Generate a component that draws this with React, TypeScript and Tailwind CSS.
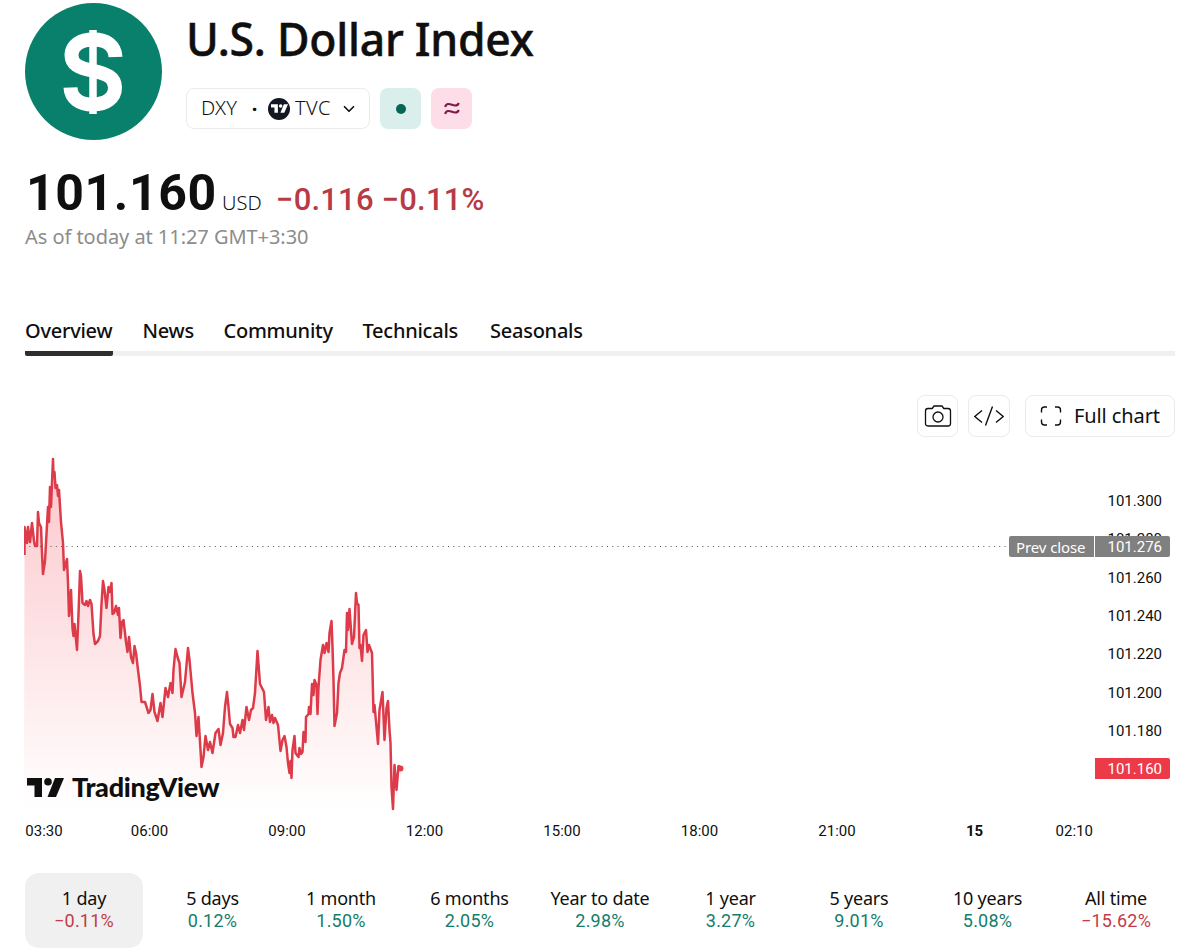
import { ChevronDown } from "lucide-react";

const tabs = [
  { label: "Overview", width: "w-[88px]" },
  { label: "News", width: "w-[51.500px]" },
  { label: "Community", width: "w-[109.500px]" },
  { label: "Technicals", width: "w-[98px]" },
  { label: "Seasonals", width: "w-[94px]" },
];

const prices = ["101.300", "101.280", "101.260", "101.240", "101.220", "101.200", "101.180"];

const times = ["06:00", "09:00", "12:00", "15:00", "18:00", "21:00", "15"];

const periods = [
  { label: "1 day", change: "−0.11%" },
  { label: "5 days", change: "0.12%" },
  { label: "1 month", change: "1.50%" },
  { label: "6 months", change: "2.05%" },
  { label: "Year to date", change: "2.98%" },
  { label: "1 year", change: "3.27%" },
  { label: "5 years", change: "9.01%" },
  { label: "10 years", change: "5.08%" },
  { label: "All time", change: "−15.62%" },
];

// x,y pairs of the price line
const line =
  "24.5,555 24.5,527 27,543 28,527 30,542 32,523 34,541 35,546 37,546 38,512 39,523 41,527 42,553 43,574 45,561 47,525 48,507 49,522 50,487 51,507 53,459 53.5,477 54.5,472 55.5,488 57,485 58,496 59,490 61,522 63,543 64,570 67,559 68,583 69,616 71,590 72.5,628 73.5,636 74.5,624 77,650 78.5,614 80,571 81,576 82.5,603 85,605 86.5,601 88,606 90,600 91.5,604 93.5,634 95,644 98,641 100,636 101.5,604 103,581 104.5,590 106.5,608 108.5,587 110,592 111.5,583 112.5,614 114,613 116,606 118,615 119,608 120.5,638 122,622 123.5,620 126,642 127.5,652 129,637 131,657 133,663 134.5,646 136,653 138,670 140,686 141.5,702 145,702 148.5,713 150.5,710 152.5,694 154.5,712 157.5,721 160.5,703 162.5,717 165.5,688 168,697 170.5,683 172.5,693 173.5,670 175.5,649 177.5,657 179.5,663 181.5,697 185,682 188,648 189.5,660 192.5,693 195,713 196.5,736 198.5,717 200.5,750 201.5,767 203.5,757 205.5,736 208,750 210,742 212.5,753 215.5,733 218.5,729 220.5,745 223,733 225,707 227,692 228.5,707 230,724 232.5,728 233.5,737 235.5,737 238,725 240,733 242.5,720 244,730 246.5,707 249,720 251,710 253,708 255,693 257.5,651 260,684 264,692 266,720 268.5,707 270,722 272,715 273.5,723 275,718 278,725 280.5,751 282.5,740 284.5,736 286.5,747 288,763 289.5,773 290.5,761 291.5,778 292.5,750 294.5,736 295.5,753 298.5,757 299.5,748 301,754 302.5,752 303.5,732 305.5,742 306,717 308.5,714 309,707 310.5,714 312,684 313.5,695 314.5,680 316.5,685 317.5,714 318.5,687 320.5,660 323,645 324.5,653 326.5,643 328.5,652 329.5,633 331.5,621 332.5,647 333.5,680 334.5,726 337,713 338.5,683 340,673 342,668 344.5,650 346,652 347,613 348,630 349.5,609 351,630 352,644 354,637 356,593 357,603 358.5,605 359.5,648 360.5,645 362,661 363.5,635 366,630 367.5,652 369,645 372,653 373.5,712 374.5,705 376.5,727 378,744 379.5,710 382.5,692 384.5,740 386.5,708 388,701 389.5,730 390.5,743 391.5,787 393,809 394.5,765 396.5,790 398.5,766 401,768.5";

function TvMark({ className }: { className: string }) {
  return (
    <svg viewBox="0 0 37 19" className={className} fill="currentColor">
      <path d="M0 0h15v19H7.5V7.5H0z" />
      <circle cx="21" cy="3.8" r="3.8" />
      <path d="M28 0h9l-8 19h-8.5z" />
    </svg>
  );
}

function Header() {
  return (
    <header className="flex h-[140px] gap-[24.500px] pt-[3px] pl-[24.500px]">
      <div className="flex h-[137px] w-[137px] items-center justify-center rounded-full bg-[#08806b]">
        <svg viewBox="0 0 60 84" className="h-[84px] w-[60px]" fill="none" stroke="#fff">
          <path d="M30 0v84" strokeWidth="7.5" />
          <path
            d="M52.5 27C52 15.500 43.500 9.500 30.500 9.500C17 9.500 8.500 15.500 8.500 25C8.500 34.500 15.500 37.500 29 40.500C44.500 44 52 47.500 52 57.500C52 68 43 74.500 30 74.500C16 74.500 8 68 7.500 57.500"
            strokeWidth="14"
          />
        </svg>
      </div>
      <div>
        <h1 className="mt-[5px] h-[62px] text-[44.500px] leading-[62px] font-medium tracking-[-0.25px] whitespace-nowrap [-webkit-text-stroke:0.5px_#0f0f0f]">
          U.S. Dollar Index
        </h1>
        <div className="mt-[18px] flex gap-[10px]">
          <div className="flex h-[41px] w-[184px] items-center rounded-[8px] border border-[#ebebeb] pl-[14px] text-[20px] leading-[38px]">
            <span className="w-[40px] pb-px font-light tracking-[0.2px]">DXY</span>
            <span className="w-[27px] text-center font-bold">·</span>
            <span className="flex h-[22px] w-[22px] items-center justify-center rounded-full bg-[#131722] text-white">
              <TvMark className="h-[9px] w-[17px]" />
            </span>
            <span className="ml-[5px] w-[39px] pb-px font-light tracking-[0.5px]">TVC</span>
            <ChevronDown className="ml-[6px] h-[18px] w-[18px]" strokeWidth={2.2} />
          </div>
          <div className="flex h-[41px] w-[41px] items-center justify-center rounded-[8px] bg-[#daefeb]">
            <span className="h-[10px] w-[10px] rounded-full bg-[#056656]" />
          </div>
          <div className="flex h-[41px] w-[41px] items-center justify-center rounded-[8px] bg-[#fcdde8]">
            <svg viewBox="0 0 16 13" className="h-[13px] w-[16px]" fill="none" stroke="#7d1a4c" strokeWidth="2.1">
              <path d="M1.200 5C2 1.200 5 1.600 8 2.800S13.500 4 14.800 1M1.200 12C2 8.200 5 8.600 8 9.800S13.500 11 14.800 8" />
            </svg>
          </div>
        </div>
      </div>
    </header>
  );
}

function Quote() {
  return (
    <section className="pl-[25px]">
      <div className="flex h-[84px] items-baseline pt-[18px]">
        <span className="w-[197px] pl-px font-[Roboto] text-[50px] leading-[70px] font-bold tracking-[0.6px]">101.160</span>
        <span className="w-[54px] text-[20px] font-light tracking-[0.1px]">USD</span>
        <span className="font-[Roboto] text-[31px] font-medium tracking-[0.2px] text-[#b73a45]">−0.116 −0.11%</span>
      </div>
      <p className="text-[20px] leading-[26px] tracking-[-0.05px] text-[#8c8c8c]">As of today at 11:27 GMT+3:30</p>
    </section>
  );
}

function Toolbar() {
  return (
    <div className="mt-[39px] flex h-[42px] justify-end pr-[25px]">
      <button className="flex w-[41px] items-center justify-center rounded-[8px] border border-[#ebebeb] pb-px">
        <svg viewBox="0 0 28 22" className="h-[22px] w-[28px]" fill="none" stroke="currentColor" strokeWidth="1.3">
          <path d="M4 3.500h4.200L10 1h8l1.800 2.500H24q2.500 0 2.500 2.500v12.500q0 2.500-2.500 2.500H4q-2.500 0-2.500-2.500V6q0-2.500 2.500-2.500z" />
          <circle cx="14" cy="12" r="5" />
        </svg>
      </button>
      <button className="ml-[10px] flex w-[42px] items-center justify-center rounded-[8px] border border-[#ebebeb] pb-px">
        <svg viewBox="0 0 30 20" className="h-[20px] w-[30px]" fill="none" stroke="currentColor" strokeWidth="1.4">
          <path d="M8 4.500.8 10.500 8 16.500M22 4.500l7.200 6-7.200 6M18.500.5l-7 19" />
        </svg>
      </button>
      <button className="ml-[15px] flex w-[150px] items-center rounded-[8px] border border-[#ebebeb] pb-px pl-[14px]">
        <svg viewBox="0 0 22 20" className="h-[20px] w-[22px]" fill="none" stroke="currentColor" strokeWidth="1.4">
          <path d="M1.500 6.500V4q0-3 3-3H7M15 1h2.500q3 0 3 3v2.500M20.500 13.500V16q0 3-3 3H15M7 19H4.500q-3 0-3-3v-2.500" />
        </svg>
        <span className="ml-[12px] text-[20px] tracking-[-0.1px] whitespace-nowrap">Full chart</span>
      </button>
    </div>
  );
}

function Chart() {
  return (
    <section className="relative flex h-[376px] pl-[24px]">
      <svg viewBox="24 437 1071 376" className="h-[376px] w-[1071px]" fill="none">
        <defs>
          <linearGradient id="area" gradientUnits="userSpaceOnUse" x1="0" y1="460" x2="0" y2="810">
            <stop offset="0" stopColor="#f23645" stopOpacity="0.28" />
            <stop offset="1" stopColor="#f23645" stopOpacity="0" />
          </linearGradient>
        </defs>
        <polygon points={`24,810 ${line} 401,810`} fill="url(#area)" />
        <path d="M24 546.500H1009" stroke="#555" strokeDasharray="1 4.300" />
        <polyline points={line} stroke="#dd3b49" strokeWidth="2.500" strokeLinejoin="round" />
        <circle cx="400.500" cy="768.500" r="3" fill="#e83a48" />
      </svg>
      <div className="w-[80px] pt-[45px] font-[Roboto] text-[15px]">
        {prices.map((price) => (
          <div key={price} className="h-[38.35px] pl-[12.500px] leading-[38.35px]">
            {price}
          </div>
        ))}
        <div className="mt-[8px] h-[21px] w-[75px] rounded-r-[2px] bg-[#ec3a48] pl-[12.500px] leading-[22px] text-white">101.160</div>
      </div>
      <div className="absolute top-[99px] left-[1009px] flex h-[21px] w-[161px] overflow-hidden rounded-[2px] bg-[#808080] text-[15px] leading-[22px] text-white">
        <span className="w-[86px] border-r border-white pl-[7px] tracking-[-0.1px]">Prev close</span>
        <span className="pl-[12.500px] font-[Roboto]">101.276</span>
      </div>
      <div className="absolute top-[338px] left-[27px] flex items-center">
        <TvMark className="h-[19px] w-[37px]" />
        <span className="ml-[8px] font-[Lato] text-[27px] leading-[24px] font-black tracking-[-0.3px]">TradingView</span>
      </div>
    </section>
  );
}

export default function App() {
  return (
    <main className="h-[950px] w-[1200px] overflow-hidden bg-white font-['Noto_Sans',sans-serif] text-[#0f0f0f]">
      <Header />
      <Quote />
      <nav className="mt-[66px] px-[25px]">
        <div className="flex h-[40px] gap-[29.500px] border-b-[5px] border-[#f0f0f0] text-[20px] leading-[30px] font-medium">
          {tabs.map((tab, i) => (
            <a
              key={tab.label}
              className={`h-[40px] whitespace-nowrap tracking-[-0.25px] ${tab.width} ${
                i === 0 ? "rounded-b-[2px] border-b-[5px] border-[#2e2e2e]" : ""
              }`}
            >
              {tab.label}
            </a>
          ))}
        </div>
      </nav>
      <Toolbar />
      <Chart />
      <div className="flex h-[36px] pl-[24px] font-[Roboto] text-[15px] leading-[36px]">
        <span className="mr-[16.750px] w-[40px] text-center">03:30</span>
        {times.map((time) => (
          <span key={time} className={`w-[137.500px] text-center ${time === "15" ? "font-bold" : ""}`}>
            {time}
          </span>
        ))}
        <span className="w-[62px] text-center">02:10</span>
      </div>
      <div className="mt-[24px] grid grid-cols-[repeat(4,118px)_122px_repeat(4,118px)] gap-[10.500px] px-[25px]">
        {periods.map((period, i) => (
          <button
            key={period.label}
            className={`flex h-[75px] flex-col items-center rounded-[14px] pt-[14px] ${i === 0 ? "bg-[#f0f0f0]" : ""}`}
          >
            <span className="text-[18px] leading-[23px] tracking-[-0.2px] whitespace-nowrap">{period.label}</span>
            <span
              className={`font-[Roboto] text-[18px] leading-[22px] tracking-[0.2px] ${
                period.change.startsWith("−") ? "text-[#c23c49]" : "text-[#147d6c]"
              }`}
            >
              {period.change}
            </span>
          </button>
        ))}
      </div>
    </main>
  );
}
